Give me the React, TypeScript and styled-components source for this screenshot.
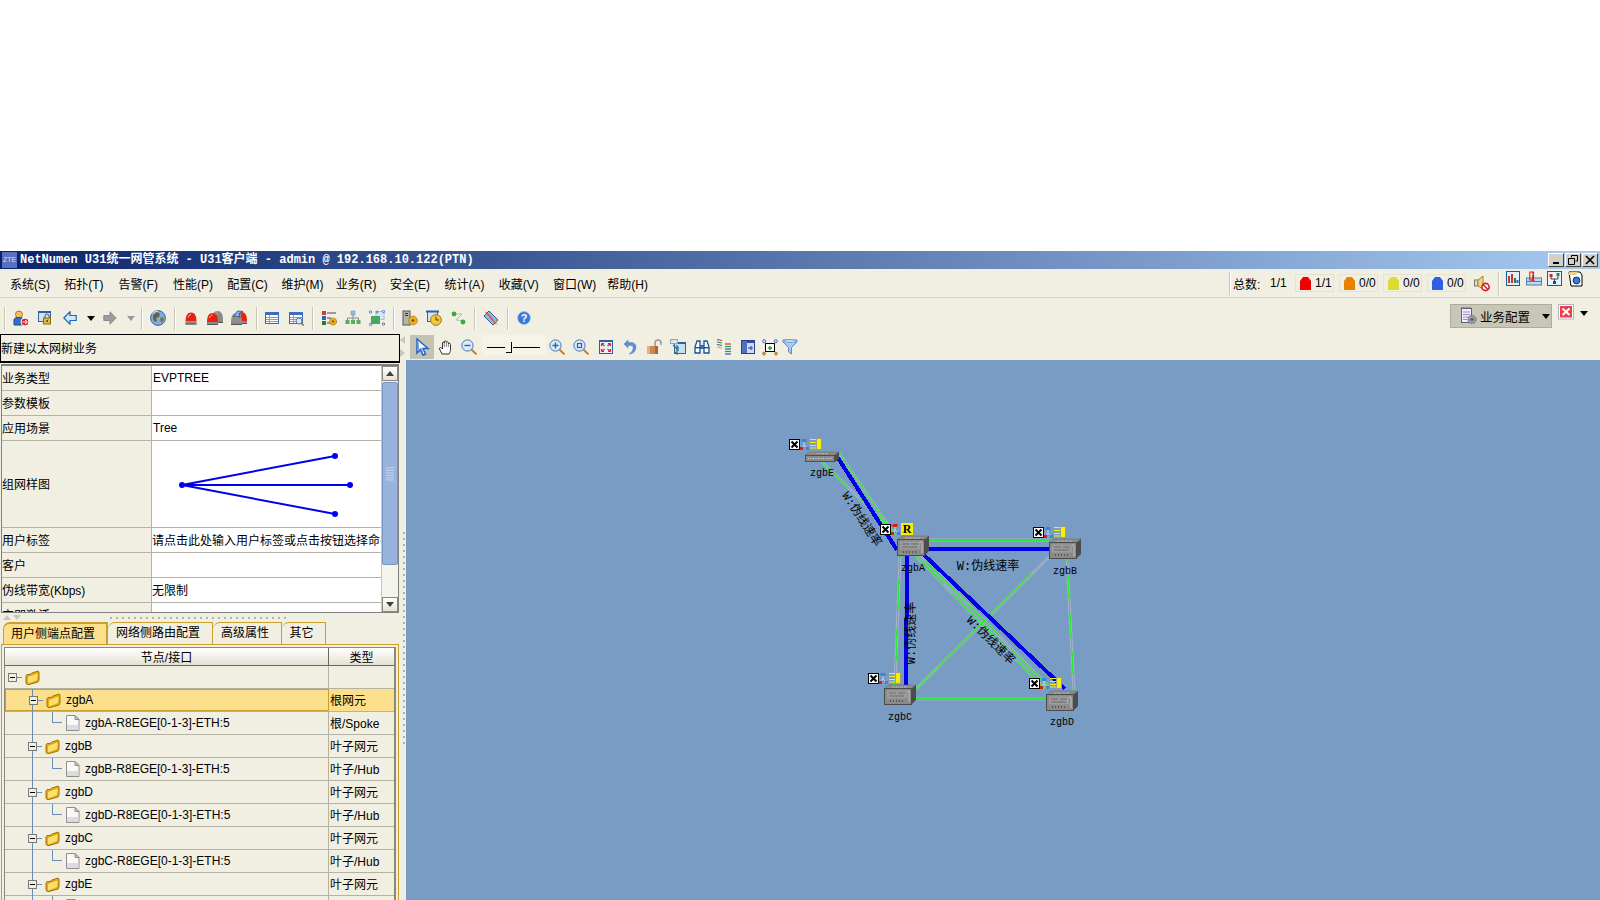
import React from 'react';
import styled, { createGlobalStyle } from 'styled-components';

const Global = createGlobalStyle`
  html, body { margin: 0; padding: 0; background: #fff; }
  body { font-family: "Liberation Sans", "Noto Sans CJK SC", sans-serif; font-size: 12px; color: #000; }
`;

const BG = '#f1efe2';

const Page = styled.div`
  width: 1600px;
  height: 900px;
  padding-top: 251px;
  box-sizing: border-box;
  overflow: hidden;
  background: #fff;
`;
const Win = styled.div`
  height: 649px;
  display: flex;
  flex-direction: column;
  background: ${BG};
`;
const TitleBar = styled.div`
  height: 18px;
  flex: none;
  display: flex;
  align-items: center;
  padding: 0 2px;
  background: linear-gradient(90deg, #0a246a, #a6caf0);
`;
const Logo = styled.div`
  width: 15px;
  height: 16px;
  margin-right: 3px;
  background: #5a6fc0;
  color: #dde;
  font: 7px/16px "Liberation Sans", sans-serif;
  text-align: center;
`;
const TitleText = styled.div`
  flex: 1;
  color: #fff;
  font: bold 12px/20px "Liberation Mono", "Noto Sans CJK SC", monospace;
  white-space: pre;
`;
const WinBtn = styled.div`
  width: 16px;
  height: 14px;
  margin-left: 1px;
  background: #d4d0c8;
  border: 1px solid;
  border-color: #fff #404040 #404040 #fff;
  box-sizing: border-box;
  display: flex;
  align-items: center;
  justify-content: center;
`;
const MenuBar = styled.div`
  height: 29px;
  flex: none;
  box-sizing: border-box;
  display: flex;
  align-items: center;
  padding-left: 10px;
  border-bottom: 1px solid #d6d3c4;
  gap: 14.3px;
`;
const MenuItem = styled.div`
  width: 40px;
  white-space: nowrap;
  font-size: 12px;
`;
const Status = styled.div`
  margin-left: auto;
  height: 28px;
  display: flex;
  align-items: center;
  padding-right: 16px;
`;
const VSep = styled.div<{ $ml?: number; $h?: number }>`
  width: 2px;
  flex: none;
  height: ${p => p.$h ?? 23}px;
  margin-left: ${p => p.$ml ?? 0}px;
  background: #fff;
  border-left: 1px solid #c9c6b6;
  box-sizing: border-box;
`;
const StatLabel = styled.div<{ $w: number; $pl?: number }>`
  width: ${p => p.$w}px;
  padding-left: ${p => p.$pl ?? 0}px;
  box-sizing: border-box;
  white-space: nowrap;
`;
const Badge = styled.div`
  width: 39px;
  height: 18px;
  margin-right: 5px;
  box-sizing: border-box;
  border: 1px solid #e6e3d5;
  display: flex;
  align-items: center;
  gap: 4px;
  padding-left: 4px;
`;
const TopIcon = styled.div<{ $w: number; $ml?: number; $center?: boolean }>`
  width: ${p => p.$w}px;
  margin-left: ${p => p.$ml ?? 0}px;
  align-self: ${p => (p.$center ? 'center' : 'flex-start')};
  margin-top: ${p => (p.$center ? 0 : 2)}px;
  display: flex;
`;
const Toolbar = styled.div`
  height: 36px;
  flex: none;
  box-sizing: border-box;
  padding: 4px 0 0 4px;
  display: flex;
  align-items: center;
`;
const Tool = styled.div<{ $w: number }>`
  width: ${p => p.$w}px;
  flex: none;
  display: flex;
  justify-content: center;
  align-items: center;
`;
const BizButton = styled.div`
  margin-left: auto;
  align-self: flex-start;
  margin-top: 2px;
  width: 102px;
  height: 24px;
  box-sizing: border-box;
  background: #c8c6b6;
  border: 1px solid #aeac9c;
  display: flex;
  align-items: center;
  padding-left: 9px;
  gap: 3px;
  font-size: 12.5px;
  white-space: nowrap;
`;
const BizCaret = styled.div`
  margin-left: 9px;
  display: flex;
`;
const RedClose = styled.div`
  align-self: flex-start;
  margin: 2px 0 0 6px;
  display: flex;
`;
const RightCaret = styled.div`
  align-self: flex-start;
  margin: 9px 12px 0 6px;
  display: flex;
`;
const Main = styled.div`
  flex: 1;
  min-height: 0;
  display: flex;
`;
const Left = styled.div`
  width: 400px;
  flex: none;
  display: flex;
  flex-direction: column;
  overflow: hidden;
`;
const Header = styled.div`
  height: 29px;
  flex: none;
  box-sizing: border-box;
  border: 1px solid #000;
  border-bottom-width: 2px;
  width: 400px;
  line-height: 29px;
  margin-bottom: 1px;
`;
const PropBox = styled.div`
  height: 249px;
  width: 398px;
  margin-left: 1px;
  flex: none;
  box-sizing: border-box;
  display: flex;
  border: 1px solid #808080;
  border-width: 2px 1px 1px 1px;
  overflow: hidden;
`;
const PropGrid = styled.div`
  flex: 1;
  overflow: hidden;
`;
const PropRow = styled.div<{ $h: number }>`
  height: ${p => p.$h}px;
  box-sizing: border-box;
  display: flex;
  border-bottom: 1px solid #b4b2a4;
`;
const PropName = styled.div`
  width: 150px;
  flex: none;
  box-sizing: border-box;
  padding: 0 0 2px 0;
  border-right: 1px solid #b4b2a4;
  display: flex;
  align-items: center;
  white-space: nowrap;
`;
const PropValue = styled.div<{ $pl?: number; $flush?: boolean }>`
  flex: 1;
  min-width: 0;
  background: #fff;
  padding-left: ${p => p.$pl ?? 1}px;
  padding-bottom: ${p => (p.$flush ? 0 : 1)}px;
  display: flex;
  align-items: center;
  white-space: nowrap;
  overflow: hidden;
`;
const CheckBox = styled.div`
  width: 11px;
  height: 11px;
  margin: 6px 0 0 6px;
  flex: none;
  box-sizing: border-box;
  border: 1px solid #6a7a9a;
`;
const Scroll = styled.div`
  width: 16px;
  flex: none;
  display: flex;
  flex-direction: column;
  background: #f5f4ea;
  border-left: 1px solid #c9c6b6;
`;
const ScrollBtn = styled.div`
  height: 15px;
  flex: none;
  box-sizing: border-box;
  background: linear-gradient(#ffffff, #e6e3d3);
  border: 1px solid #8a8878;
  display: flex;
  align-items: center;
  justify-content: center;
`;
const Thumb = styled.div`
  height: 183px;
  margin-top: 1px;
  box-sizing: border-box;
  background: #98b4dc;
  border: 1px solid #7896c4;
  border-radius: 2px;
  display: flex;
  align-items: center;
  justify-content: center;
`;
const ScrollSpace = styled.div`
  flex: 1;
`;
const HSplit = styled.div`
  height: 9px;
  flex: none;
  display: flex;
  align-items: center;
  padding-left: 3px;
`;
const HDots = styled.div`
  width: 178px;
  height: 2px;
  margin-left: 89px;
  background: repeating-linear-gradient(90deg, #b4b2a4 0 2px, transparent 2px 6px);
`;
const Tabs = styled.div`
  height: 22px;
  flex: none;
  display: flex;
  padding-left: 3px;
`;
const Tab = styled.div<{ $w: number; $on?: boolean }>`
  width: ${p => p.$w}px;
  box-sizing: border-box;
  padding-right: 4px;
  background: ${p => (p.$on ? '#fbdf8a' : BG)};
  border: 1px solid #c8a030;
  border-width: ${p => (p.$on ? '2px 2px 0 1px' : '1px 1px 0 0')};
  border-top-left-radius: 7px;
  text-align: center;
  line-height: 20px;
  font-size: 12px;
  white-space: nowrap;
`;
const TabPanel = styled.div`
  flex: 1;
  width: 398px;
  margin-left: 1px;
  box-sizing: border-box;
  border: 1px solid #c8a030;
  border-bottom: none;
  padding: 2px 0 0 2px;
  overflow: hidden;
`;
const TreeTable = styled.div`
  width: 392px;
  box-sizing: border-box;
  border-left: 1px solid #8a8878;
  border-right: 2px solid #8a8878;
`;
const HeadRow = styled.div`
  height: 19px;
  display: flex;
  box-sizing: border-box;
  border-top: 1px solid #8a8878;
  border-bottom: 1px solid #6a6858;
  background: linear-gradient(#ffffff, #e4e2d2);
  line-height: 20px;
  text-align: center;
`;
const HeadA = styled.div`
  width: 324px;
  border-right: 1px solid #6a6858;
  box-sizing: border-box;
`;
const HeadB = styled.div`
  flex: 1;
`;
const Row = styled.div<{ $h?: number; $sel?: boolean }>`
  height: ${p => p.$h ?? 23}px;
  box-sizing: border-box;
  display: flex;
  border-bottom: 1px solid #b4b2a4;
  background: ${p => (p.$sel ? '#fbdf8a' : 'transparent')};
`;
const NodeCell = styled.div<{ $kind: string; $sel?: boolean }>`
  width: 324px;
  box-sizing: border-box;
  position: relative;
  display: flex;
  align-items: center;
  padding-left: ${p => (p.$kind === 'root' ? 3 : p.$kind === 'node' ? (p.$sel ? 24 : 23) : 61)}px;
  border-right: 1px solid #b4b2a4;
  outline: ${p => (p.$sel ? '1px solid #c8a030' : 'none')};
  outline-offset: -1px;
  &::before {
    content: '';
    display: ${p => (p.$kind === 'root' ? 'none' : 'block')};
    position: absolute;
    left: 27px;
    top: 0;
    bottom: -1px;
    width: 1px;
    background: #6c8cb8;
  }
  &::after {
    content: '';
    display: ${p => (p.$kind === 'child' ? 'block' : 'none')};
    position: absolute;
    left: 47px;
    top: 0;
    width: 10px;
    height: 11px;
    box-sizing: border-box;
    border-left: 1px solid #6c8cb8;
    border-bottom: 1px solid #6c8cb8;
  }
`;
const Handle = styled.div`
  width: 9px;
  height: 9px;
  box-sizing: border-box;
  border: 1px solid #7a7a7a;
  background: ${BG};
  position: relative;
  z-index: 1;
  flex: none;
  margin-right: 8px;
  &::before {
    content: '';
    position: absolute;
    left: 1px;
    right: 1px;
    top: 3px;
    height: 1px;
    background: #000;
  }
  &::after {
    content: '';
    position: absolute;
    left: 8px;
    top: 3px;
    width: 5px;
    height: 1px;
    background: #6c8cb8;
  }
`;
const NodeText = styled.span`
  margin-left: 5px;
  white-space: nowrap;
`;
const TypeCell = styled.div`
  flex: 1;
  padding-left: 1px;
  padding-bottom: 2px;
  display: flex;
  align-items: center;
  white-space: nowrap;
`;
const VSplit = styled.div`
  width: 6px;
  flex: none;
  display: flex;
  flex-direction: column;
  align-items: flex-start;
`;
const SplitArrows = styled.div`
  height: 26px;
  flex: none;
  display: flex;
`;
const VDots = styled.div`
  width: 2px;
  height: 213px;
  margin: 172px 0 0 3px;
  background: repeating-linear-gradient(180deg, #b4b2a4 0 2px, transparent 2px 6px);
`;
const Right = styled.div`
  flex: 1;
  min-width: 0;
  display: flex;
  flex-direction: column;
`;
const CanvasBar = styled.div`
  height: 26px;
  flex: none;
  padding-left: 4px;
  display: flex;
  align-items: center;
`;
const ArrowTool = styled.div`
  width: 24px;
  height: 24px;
  background: #c4c2b2;
  display: flex;
  align-items: center;
  justify-content: center;
`;
const SliderBox = styled.div`
  width: 64px;
  height: 20px;
  margin: 0 0 4px 2px;
  background: #f6f4ea;
  flex: none;
  display: flex;
`;
const Canvas = styled.div`
  flex: 1;
  background: #789cc4;
  position: relative;
  overflow: hidden;
`;
const Topo = styled.svg`
  position: absolute;
  left: 0;
  top: 0;
  width: 1194px;
  height: 540px;
  text { font-family: "Liberation Mono", "Noto Sans CJK SC", monospace; fill: #000; }
`;

/* ------- small drawings ------- */
const S = ({ w = 16, h = 16, vb, children }: { w?: number; h?: number; vb?: string; children: React.ReactNode }) => (
  <svg width={w} height={h} viewBox={vb ?? `0 0 ${w} ${h}`} style={{ display: 'block', flex: 'none' }}>{children}</svg>
);
const Caret = ({ c = '#000' }: { c?: string }) => <S w={8} h={5}><path d="M0 0H8L4 5Z" fill={c} /></S>;
const Mag = ({ x = 0, y = 0, r = 3 }: { x?: number; y?: number; r?: number }) => (
  <g transform={`translate(${x} ${y})`}>
    <path d={`M${r * .7} ${r * .7}L${r * 1.6} ${r * 1.6}`} stroke="#d08020" strokeWidth="2" />
    <circle r={r} fill="#d8ecfa" stroke="#4a70b0" />
  </g>
);
const Gear = ({ x, y, r = 3.4, c = '#e8b020' }: { x: number; y: number; r?: number; c?: string }) => (
  <g transform={`translate(${x} ${y})`}>
    <circle r={r} fill={c} stroke="#8a6010" strokeWidth=".8" strokeDasharray="1.3 .8" />
    <circle r={r * .7} fill={c} />
    <circle r={r * .3} fill="#6a4a10" />
  </g>
);
const Dome = ({ x, y, c = '#e82010', w = 11 }: { x: number; y: number; c?: string; w?: number }) => (
  <g transform={`translate(${x} ${y})`}>
    <path d={`M0 9C0 3 2 0 ${w / 2} 0S${w} 3 ${w} 9Z`} fill={c} />
    <path d="M2.5 5C3 3 4 2 5.5 2" stroke="#ffb0a0" fill="none" strokeWidth="1" />
    <rect y="9" width={w} height="3" fill="#8a8a8a" />
    <rect y="11" width={w} height="1" fill="#555" />
  </g>
);
const TableLines = () => (
  <>
    <rect x="1" y="2" width="14" height="3" fill="#3d6cc0" />
    <rect x="1.5" y="4.5" width="13" height="9" fill="#fff" stroke="#3d6cb0" />
    <path d="M2 7.5H14M2 9.5H14M2 11.5H14" stroke="#7aa0d8" />
    <path d="M5.5 5V13" stroke="#7aa0d8" />
  </>
);

const I: Record<string, React.ReactNode> = {
  user: <S><circle cx="6" cy="4.5" r="3.5" fill="#f2c060" stroke="#b07820" /><path d="M1 15V10C1 8 3 7.5 6 7.5S10 8 10 10V15Z" fill="#2f70c8" stroke="#1d4c90" /><circle cx="12" cy="12" r="4" fill="#d82020" stroke="#fff" /><path d="M9.5 12H14M12 10L14.5 12L12 14" stroke="#fff" fill="none" /></S>,
  lockscr: <S><rect x="1.5" y="1.5" width="12" height="10" fill="#cfe2f6" stroke="#3462a8" /><rect x="1" y="1" width="13" height="2" fill="#2f5da8" /><path d="M8 8V6A2 2 0 0 1 12 6V8" stroke="#555" fill="none" /><rect x="6.5" y="8" width="7" height="6" fill="#e8b840" stroke="#8a6a10" /><rect x="9.5" y="10" width="1.5" height="2" fill="#604000" /></S>,
  back: <S w={14} h={14}><path d="M.8 7L7 .8V4.5H13.2V9.5H7V13.2Z" fill="#d4e8f8" stroke="#1a68b8" strokeWidth="1.2" /></S>,
  fwd: <S w={14} h={14}><path d="M13.2 7L7 .8V4.5H.8V9.5H7V13.2Z" fill="#9c9c9c" stroke="#8a8a8a" /></S>,
  globe: <S><circle cx="8" cy="8" r="7.4" fill="#7eaee0" stroke="#37628f" /><path d="M3 5L7 2L10 4L9 7L6 8L7 11L5 12L3 9Z" fill="#6a6038" /><path d="M10 8L13 7L14 10L11 13Z" fill="#7a7040" /><path d="M2.5 4A7 7 0 0 1 8 1" stroke="#e4f0ff" fill="none" /></S>,
  alarm1: <S w={12} h={13}><Dome x={0.5} y={0.5} /></S>,
  alarm2: <S h={14}><Dome x={5} y={0} c="#8a8a8a" /><Dome x={0} y={2} /></S>,
  alarm3: <S h={16}><Dome x={5} y={2} /><Dome x={0} y={3} c="#909090" /><path d="M2 7L6.5 1L12 1.5L8 3.5L9 7.5L5.5 6Z" fill="#8ab8ec" stroke="#2a5898" strokeWidth=".9" /></S>,
  table: <S><TableLines /></S>,
  tfind: <S><TableLines /><Mag x={11} y={11} r={3} /></S>,
  cfg: <S><rect x="1" y="1" width="4" height="4" fill="#c84030" /><rect x="1" y="6" width="4" height="4" fill="#3060c0" /><rect x="1" y="11" width="4" height="4" fill="#208030" /><path d="M6 3H15M6 8H10M6 13H9" stroke="#444" /><Gear x={12} y={11.5} r={3.6} /></S>,
  org: <S><rect x="6" y="1" width="4" height="4" fill="#90b8e8" stroke="#6a90c8" strokeWidth=".5" /><path d="M8 5V8M2.5 10V8H13.5V10M8 8V10" stroke="#888" fill="none" /><rect x="0.5" y="10" width="4" height="4" fill="#60a860" /><rect x="6" y="10" width="4" height="4" fill="#60a860" /><rect x="11.5" y="10" width="4" height="4" fill="#60a860" /></S>,
  sel: <S><rect x="7" y="1.5" width="8" height="8" fill="#d8e6f6" stroke="#a8c0e0" /><rect x="2" y="6" width="9" height="8" fill="#48a860" /><g fill="#e8f0ff" stroke="#3060c0" strokeWidth=".8"><circle cx="1.5" cy="2" r="1.2" /><circle cx="8" cy="2" r="1" /><circle cx="14.5" cy="14" r="1.2" /><circle cx="1.5" cy="14.5" r="1.2" /><circle cx="14.5" cy="1.5" r="1.2" /></g></S>,
  srv: <S><rect x="1" y="1" width="7" height="14" fill="#b4b4ac" stroke="#555" /><rect x="3" y="3" width="3" height="1" fill="#333" /><rect x="3" y="5" width="3" height="1" fill="#333" /><Gear x={11} y={10.5} r={4.4} /></S>,
  clock: <S><rect x="1.5" y="1.5" width="10" height="10" fill="#cfe2f6" stroke="#3462a8" /><rect x="0" y="0.5" width="13" height="2" fill="#2f5da8" /><circle cx="10" cy="10" r="5.4" fill="#f2c840" stroke="#a87810" /><path d="M10 6.5V10H13" stroke="#604000" fill="none" /></S>,
  nodes: <S w={15} h={14}><path d="M3 3L11 3L5 9L13 10" stroke="#bbb" fill="none" /><circle cx="3" cy="3" r="2.4" fill="#30b040" /><circle cx="12" cy="11" r="2.4" fill="#30b040" /></S>,
  tools: <S><path d="M1 6L6 1L15 10L10 15Z" fill="#8abcec" stroke="#2c5c98" /><path d="M3 2L13 14" stroke="#e05828" strokeWidth="1.6" /><path d="M12 13L15 15.5L14 12Z" fill="#e8c860" /></S>,
  help: <S w={14} h={14} vb="0 0 14 14"><circle cx="7" cy="7" r="6.5" fill="#3878d8" stroke="#a8c8f0" /><text x="7" y="11" textAnchor="middle" fontFamily="Liberation Sans" fontWeight="bold" fontSize="11" fill="#fff">?</text></S>,
  cursor: <S h={18}><path d="M3 1V15L6.5 11.5L9 17L11.5 16L9 10.5H14Z" fill="#fff" stroke="#1a60c0" strokeWidth="1.4" /><path d="M4.5 4V12L7 10L9 14" fill="none" stroke="#7aa8e8" /></S>,
  hand: <S><path d="M4 15L1.5 10C1 8.5 2.5 8 3.5 9L4.5 10V4C4.5 2.8 6 2.8 6.3 4V3C6.3 1.5 8 1.5 8.4 3V3.5C8.6 2.2 10.3 2.3 10.4 4V5C10.8 4 12.5 4 12.5 5.5V10C12.5 12 12 13.5 11 15Z" fill="#fff" stroke="#333" /><path d="M6.3 4V8M8.4 3.5V8M10.4 5V8" stroke="#888" /></S>,
  zout: <S><Mag x={6.5} y={6.5} r={5.6} /><path d="M3.5 6.5H9.5" stroke="#3460a8" strokeWidth="1.4" /></S>,
  zin: <S><Mag x={6.5} y={6.5} r={5.6} /><path d="M3.5 6.5H9.5M6.5 3.5V9.5" stroke="#3460a8" strokeWidth="1.4" /></S>,
  zfit: <S><Mag x={6.5} y={6.5} r={5.6} /><rect x="4.5" y="4.5" width="4" height="4" fill="none" stroke="#3460a8" strokeWidth="1.2" /></S>,
  fit: <S><rect x="1.5" y="2" width="13" height="12.5" fill="#e8f0fa" stroke="#2f5da8" /><rect x="1" y="1" width="14" height="2" fill="#2f5da8" /><path d="M4 5L6.5 7M12 5L9.5 7M4 12L6.5 10M12 12L9.5 10M3.5 4.5H6M3.5 4.5V7M12.5 4.5H10M12.5 4.5V7M3.5 12.5H6M3.5 12.5V10M12.5 12.5H10M12.5 12.5V10" stroke="#e02020" strokeWidth="1.2" fill="none" /></S>,
  undo: <S w={14} h={16}><path d="M5 1L1 5L5 9V6.5H8C10 6.5 10.5 8 10 10C9.6 12 8 14 6 15C10 15 13 12 13 8C13 5 11 3.5 8 3.5H5Z" fill="#5a90d8" stroke="#4a80c8" strokeWidth=".5" /></S>,
  unlock: <S><path d="M9 7V4A3 3 0 0 1 15 4V6" stroke="#999" strokeWidth="1.5" fill="none" /><rect x="1" y="7" width="11" height="8" fill="#cc8a50" /><rect x="1" y="7" width="3" height="8" fill="#e8b080" /><rect x="9" y="7" width="3" height="8" fill="#a86830" /></S>,
  wincur: <S><rect x="4.5" y="4.5" width="11" height="10" fill="#c8e0f4" stroke="#2f6098" /><rect x="4" y="3" width="12" height="2" fill="#2f6098" /><rect x="0.5" y="0.5" width="7" height="4" fill="#d8e8f0" stroke="#8ab" /><path d="M3 6L8 11V8L7 7V15L5 13" stroke="#2a7a8a" strokeWidth="1.3" fill="none" /></S>,
  bino: <S><path d="M1 14V8L3 2H6V14Z M10 14V2H13L15 8V14Z" fill="#fff" stroke="#1a5090" strokeWidth="1.3" /><rect x="6" y="6" width="4" height="4" fill="#2a68b0" /><rect x="1" y="8" width="5" height="1.4" fill="#1a5090" /><rect x="10" y="8" width="5" height="1.4" fill="#1a5090" /></S>,
  lines: <S h={18}><g strokeWidth="1.2"><path d="M1 1.5L6 2.5" stroke="#d03030" /><path d="M1 4L6 5" stroke="#20a040" /><path d="M1 6.5L6 7.5" stroke="#3050c8" /><path d="M1 9L6 10" stroke="#e8a020" /><path d="M9 6H15" stroke="#d03030" /><path d="M9 8.5H15" stroke="#20a040" /><path d="M9 11H15" stroke="#3050c8" /><path d="M9 13.5H15" stroke="#20a040" /><path d="M9 16H15" stroke="#3050c8" /></g></S>,
  winplus: <S w={14} h={14}><rect x=".5" y=".5" width="13" height="13" fill="#d0dcf0" stroke="#283f90" strokeWidth="1" /><rect x="1" y="1" width="12" height="2" fill="#3050a8" /><rect x="1" y="1" width="5" height="12" fill="#5070c0" /><path d="M7 8H12M10 6V10" stroke="#283f90" /></S>,
  nodesel: <S h={17} vb="0 0 16 17"><rect x="3.5" y="4.5" width="9" height="8" fill="#fff" stroke="#000" /><path d="M6 9H10M8 7V11" stroke="#20a040" strokeWidth="1.4" /><path d="M3.5 4.5L2 2.5M12.5 4.5L14 2.5" stroke="#555" /><g fill="#c8e0f8" stroke="#3060a8" strokeWidth=".8"><circle cx="2.2" cy="2.2" r="1.6" /><circle cx="13.8" cy="2.2" r="1.6" /></g><g fill="#e8b040" stroke="#906010" strokeWidth=".8"><circle cx="2" cy="14.6" r="1.4" /><circle cx="14" cy="14.6" r="1.4" /></g></S>,
  funnel: <S><path d="M1 1H15V3L9.5 8.5V15L6.5 13V8.5L1 3Z" fill="#a8ccf0" stroke="#5a8ac8" /><ellipse cx="8" cy="2" rx="7" ry="1.3" fill="#d8ecff" stroke="#6a98d0" /></S>,
  speaker: <S h={17} vb="0 0 16 17"><rect x="0.5" y="5" width="3.5" height="6" fill="#ddd" stroke="#777" /><path d="M4 5L9 1V14L4 11Z" fill="#f0d878" stroke="#a08838" /><circle cx="11.5" cy="12" r="3.6" fill="#fff" stroke="#d02020" strokeWidth="1.6" /><path d="M9 9.5L14 14.5" stroke="#d02020" strokeWidth="1.5" /></S>,
  chart: <S w={14} h={15}><rect x=".5" y=".5" width="13" height="14" fill="#dff0fa" stroke="#1a5a98" /><path d="M3 12V5" stroke="#d03030" strokeWidth="2" /><path d="M6 12V3" stroke="#d03030" strokeWidth="2" /><path d="M9 12V7" stroke="#208040" strokeWidth="2" /><path d="M11.5 12V9" stroke="#3060c0" strokeWidth="2" /></S>,
  info: <S h={15}><rect x="0.5" y="7" width="15" height="7" fill="#bcd8f0" stroke="#4a80b0" /><path d="M0 10.5H16" stroke="#4a80b0" /><text x="5.5" y="10" fontFamily="Liberation Serif" fontWeight="bold" fontSize="12" fill="#e01818">i</text><rect x="3.8" y="1" width="3.5" height="8" fill="none" stroke="#e01818" /></S>,
  tree: <S w={15} h={15}><rect x=".5" y=".5" width="14" height="14" fill="#e8f4fc" stroke="#1a5a98" /><rect x="2.5" y="3" width="3" height="3" fill="#e02020" /><rect x="9.5" y="2" width="3" height="3" fill="#209040" /><rect x="6" y="10" width="3" height="3" fill="#2040c0" /><path d="M4 6V8H11V5M7.5 8V10" stroke="#444" fill="none" /></S>,
  note: <S h={16}><path d="M1 1H12L14 4V15H3Z" fill="#fff" stroke="#000" /><path d="M1 1H10L8 4H1Z" fill="#f0d090" /><circle cx="8.5" cy="9.5" r="3.4" fill="#3080d0" stroke="#103860" /></S>,
  biz: <S h={18} w={17}><rect x="1.5" y="1.5" width="10" height="14" fill="#f4f0fa" stroke="#606078" /><path d="M1.5 1H11.5" stroke="#706090" strokeWidth="2" strokeDasharray="1 1" /><path d="M3 5H10M3 7.5H10M3 10H8M3 12.5H7" stroke="#9a88c8" /><Gear x={12} y={12.5} r={4.2} c="#8a9cb4" /></S>,
  red: <S><rect x=".5" y=".5" width="15" height="14.5" fill="#fff" stroke="#b8b4c4" /><rect x="2" y="2" width="12" height="11.5" fill="#ec4048" /><path d="M4.5 4.5L11.5 11M11.5 4.5L4.5 11" stroke="#fff" strokeWidth="2" /></S>,
  folder: <S w={15} h={15}><path d="M1 6L2 4.5H5L7 3L13 1L14 2V10L13 12L4 14.5H2L1 13Z" fill="#e8a810" stroke="#a07408" /><path d="M3 7L12.5 3.5Q13 6 12 10L3 13.5Z" fill="#fbe070" /></S>,
  page: <S w={14} h={16}><path d="M.5 .5H9L13 4.5V15.5H.5Z" fill="#f8f8f8" stroke="#909090" /><path d="M9 .5V4.5H13Z" fill="#c8c8c8" stroke="#909090" /><rect x="1" y="10" width="11.5" height="5" fill="#dcdce0" /></S>,
  up: <S w={8} h={5}><path d="M0 5H8L4 0Z" fill="#404040" /></S>,
  down: <S w={8} h={5}><path d="M0 0H8L4 5Z" fill="#404040" /></S>,
  grip: <S w={10} h={14}><path d="M1 1H9M1 3.5H9M1 6H9M1 8.5H9M1 11H9M1 13H9" stroke="#c4d4ee" /></S>,
};

const XBox = ({ x, y }: { x: number; y: number }) => (
  <g transform={`translate(${x} ${y})`}>
    <rect x=".5" y=".5" width="10" height="10" fill="#fff" stroke="#000" />
    <path d="M2.5 2.5L8.5 8.5M8.5 2.5L2.5 8.5" stroke="#000" strokeWidth="2" />
  </g>
);
const NetIcon = ({ x, y, top = '#3a88d0' }: { x: number; y: number; top?: string }) => (
  <g transform={`translate(${x} ${y})`}>
    <path d="M4 3V6L1.5 9M4 6L7 9" stroke="#c0d8ec" fill="none" />
    <rect x="1.5" y="0" width="5" height="3" fill={top} />
    <rect x="0" y="8" width="3" height="3" fill="#e01818" />
    <rect x="6" y="8" width="3" height="3" fill="#3a88d0" />
  </g>
);
const YellowCard = ({ x, y }: { x: number; y: number }) => (
  <g transform={`translate(${x} ${y})`}>
    <path d="M0 1.5H6M0 4.5H6M0 7.5H6M0 10H6" stroke="#f8f000" strokeWidth="1.2" />
    <rect x="6.5" y=".5" width="5" height="11" fill="#f8f000" stroke="#9aa080" />
  </g>
);
const Device = ({ x, y, small }: { x: number; y: number; small?: boolean }) =>
  small ? (
    <g transform={`translate(${x} ${y})`}>
      <path d="M0 3L4 0H34L30 3Z" fill="#8c8c8c" stroke="#6a6a6a" strokeWidth=".5" />
      <path d="M30 3L34 0V7L30 10Z" fill="#4c4c4c" />
      <rect x=".5" y="3.5" width="29" height="6" fill="#8a8a8a" stroke="#505050" />
      <path d="M3 6.5H27" stroke="#e0e0e0" strokeDasharray="1 1.5" />
      <path d="M12 1.5H24" stroke="#b0b0b0" strokeDasharray="3 1" />
    </g>
  ) : (
    <g transform={`translate(${x} ${y})`}>
      <path d="M0 4L5 0H32L27 4Z" fill="#8c8c8c" stroke="#6a6a6a" strokeWidth=".5" />
      <path d="M27 4L32 0V15L27 20Z" fill="#4c4c4c" />
      <rect x=".5" y="3.5" width="27" height="16" fill="#8a8a8a" stroke="#4c4c4c" />
      <rect x="3" y="5.5" width="20" height="8" fill="#9c9c9c" />
      <path d="M5 8H12M5 11H20M14 8H21" stroke="#6a6a6a" />
      <path d="M6 16H21" stroke="#222" strokeDasharray="1 2" />
      <path d="M23 6H25V17" stroke="#c0c0c0" fill="none" />
      <path d="M8 2H24" stroke="#b0b0b0" strokeDasharray="3 1" />
    </g>
  );

const greens: number[][] = [
  [839, 453, 895, 535],
  [822, 462, 885, 523],
  [929, 540, 1049, 540],
  [900, 556, 895, 685],
  [916, 556, 1045, 689],
  [920, 555, 1048, 686],
  [1049, 557, 916, 689],
  [1067, 559, 1074, 691],
  [916, 699, 1046, 699],
];
const blues: number[][] = [
  [838, 458, 897, 550],
  [929, 549, 1049, 549],
  [907, 556, 906, 685],
  [924, 555, 1065, 689],
];

const Topology = () => (
  <Topo viewBox="406 360 1194 540">
    {greens.map(([a, b, c, d], i) => (
      <line key={`h${i}`} x1={a} y1={b} x2={c} y2={d} stroke="#b8c0cc" strokeWidth="3" opacity=".6" />
    ))}
    {greens.map(([a, b, c, d], i) => (
      <line key={`g${i}`} x1={a} y1={b} x2={c} y2={d} stroke="#30e830" strokeWidth="1.2" shapeRendering="crispEdges" />
    ))}
    {blues.map(([a, b, c, d], i) => (
      <line key={`b${i}`} x1={a} y1={b} x2={c} y2={d} stroke="#0000e8" strokeWidth="4" shapeRendering="crispEdges" />
    ))}
    <Device x={805} y={452} small />
    <Device x={897} y={536} />
    <Device x={1049} y={539} />
    <Device x={884} y={685} />
    <Device x={1046} y={691} />

    <XBox x={789} y={439} /><NetIcon x={800} y={439} /><YellowCard x={810} y={438} />
    <XBox x={880} y={524} /><NetIcon x={891} y={524} top="#e01818" />
    <rect x="901" y="523" width="12" height="12" fill="#f8f000" />
    <text x="907" y="533" textAnchor="middle" fontSize="12" fontWeight="bold" style={{ fontFamily: '"Liberation Serif", serif' }}>R</text>
    <XBox x={1033} y={527} /><NetIcon x={1044} y={527} /><YellowCard x={1054} y={526} />
    <XBox x={868} y={673} /><NetIcon x={879} y={673} /><YellowCard x={889} y={672} />
    <XBox x={1029} y={678} /><NetIcon x={1040} y={678} /><YellowCard x={1050} y={677} />

    <text x="822" y="476" fontSize="10" textAnchor="middle">zgbE</text>
    <text x="913" y="571" fontSize="10" textAnchor="middle">zgbA</text>
    <text x="1065" y="574" fontSize="10" textAnchor="middle">zgbB</text>
    <text x="900" y="720" fontSize="10" textAnchor="middle">zgbC</text>
    <text x="1062" y="725" fontSize="10" textAnchor="middle">zgbD</text>

    <text x="988" y="570" fontSize="12" textAnchor="middle">W:伪线速率</text>
    <text transform="translate(862 519) rotate(57)" y="4" fontSize="12" textAnchor="middle">W:伪线速率</text>
    <text transform="translate(911 633) rotate(-90)" y="4" fontSize="12" textAnchor="middle">W:伪线速率</text>
    <text transform="translate(991 640) rotate(45)" y="4" fontSize="12" textAnchor="middle">W:伪线速率</text>
  </Topo>
);

const menus = ['系统(S)', '拓扑(T)', '告警(F)', '性能(P)', '配置(C)', '维护(M)', '业务(R)', '安全(E)', '统计(A)', '收藏(V)', '窗口(W)', '帮助(H)'];
const alarms = [
  { c: '#f00000', t: '1/1' },
  { c: '#e88000', t: '0/0' },
  { c: '#dcdc30', t: '0/0' },
  { c: '#2e5fe0', t: '0/0' },
];
const Lamp = ({ c }: { c: string }) => <S w={11} h={13}><path d="M0 13V4L3 0H8L11 4V13Z" fill={c} /></S>;

const rows = [
  { k: 'node', t: 'zgbA', y: '根网元', sel: true },
  { k: 'child', t: 'zgbA-R8EGE[0-1-3]-ETH:5', y: '根/Spoke' },
  { k: 'node', t: 'zgbB', y: '叶子网元' },
  { k: 'child', t: 'zgbB-R8EGE[0-1-3]-ETH:5', y: '叶子/Hub' },
  { k: 'node', t: 'zgbD', y: '叶子网元' },
  { k: 'child', t: 'zgbD-R8EGE[0-1-3]-ETH:5', y: '叶子/Hub' },
  { k: 'node', t: 'zgbC', y: '叶子网元' },
  { k: 'child', t: 'zgbC-R8EGE[0-1-3]-ETH:5', y: '叶子/Hub' },
  { k: 'node', t: 'zgbE', y: '叶子网元' },
  { k: 'child', t: 'zgbE-R8EGE[0-1-3]-ETH:5', y: '叶子/Hub' },
];

export default function App() {
  return (
    <Page>
      <Global />
      <Win>
        <TitleBar>
          <Logo>ZTE</Logo>
          <TitleText>NetNumen U31统一网管系统 - U31客户端 - admin @ 192.168.10.122(PTN)</TitleText>
          <WinBtn><S w={10} h={10}><rect x="2" y="7" width="6" height="2" fill="#000" /></S></WinBtn>
          <WinBtn><S w={10} h={10}><path d="M3.5 2.5V.5H9.5V6H7.5M.5 3.5H6.5V9.5H.5Z" fill="none" stroke="#000" /></S></WinBtn>
          <WinBtn><S w={10} h={10}><path d="M1 1L9 9M9 1L1 9" stroke="#000" strokeWidth="1.6" /></S></WinBtn>
        </TitleBar>

        <MenuBar>
          {menus.map(m => <MenuItem key={m}>{m}</MenuItem>)}
          <Status>
            <VSep />
            <StatLabel $w={39} $pl={2}>总数:</StatLabel>
            <StatLabel $w={25}>1/1</StatLabel>
            {alarms.map((a, i) => (
              <Badge key={i}><Lamp c={a.c} />{a.t}</Badge>
            ))}
            <TopIcon $w={16} $ml={3} $center>{I.speaker}</TopIcon>
            <VSep $ml={8} />
            <TopIcon $w={14} $ml={6}>{I.chart}</TopIcon>
            <TopIcon $w={16} $ml={6}>{I.info}</TopIcon>
            <TopIcon $w={15} $ml={5}>{I.tree}</TopIcon>
            <TopIcon $w={16} $ml={6}>{I.note}</TopIcon>
          </Status>
        </MenuBar>

        <Toolbar>
          <VSep />
          <Tool $w={30}>{I.user}</Tool>
          <Tool $w={18}>{I.lockscr}</Tool>
          <Tool $w={32}>{I.back}</Tool>
          <Tool $w={10}><Caret /></Tool>
          <Tool $w={28}>{I.fwd}</Tool>
          <Tool $w={14}><Caret c="#999" /></Tool>
          <VSep $ml={3} />
          <Tool $w={30}>{I.globe}</Tool>
          <VSep $ml={1} />
          <Tool $w={30}>{I.alarm1}</Tool>
          <Tool $w={18}>{I.alarm2}</Tool>
          <Tool $w={30}>{I.alarm3}</Tool>
          <VSep $ml={2} />
          <Tool $w={28}>{I.table}</Tool>
          <Tool $w={19}>{I.tfind}</Tool>
          <VSep $ml={7} />
          <Tool $w={30}>{I.cfg}</Tool>
          <Tool $w={18}>{I.org}</Tool>
          <Tool $w={30}>{I.sel}</Tool>
          <VSep $ml={1} />
          <Tool $w={30}>{I.srv}</Tool>
          <Tool $w={18}>{I.clock}</Tool>
          <Tool $w={30}>{I.nodes}</Tool>
          <VSep $ml={1} />
          <Tool $w={30}>{I.tools}</Tool>
          <VSep $ml={1} />
          <Tool $w={30}>{I.help}</Tool>
          <BizButton>
            {I.biz}
            业务配置
            <BizCaret><Caret /></BizCaret>
          </BizButton>
          <RedClose>{I.red}</RedClose>
          <RightCaret><Caret /></RightCaret>
        </Toolbar>

        <Main>
          <Left>
            <Header>新建以太网树业务</Header>
            <PropBox>
              <PropGrid>
                <PropRow $h={25}><PropName>业务类型</PropName><PropValue>EVPTREE</PropValue></PropRow>
                <PropRow $h={25}><PropName>参数模板</PropName><PropValue /></PropRow>
                <PropRow $h={25}><PropName>应用场景</PropName><PropValue>Tree</PropValue></PropRow>
                <PropRow $h={87}>
                  <PropName>组网样图</PropName>
                  <PropValue $pl={0} $flush>
                    <S w={230} h={86}>
                      <g stroke="#0000f0" strokeWidth="2" transform="translate(-152 -441)">
                        <path d="M182 485L335 456M182 485H350M182 485L335 514" fill="none" />
                        <circle cx="182" cy="485" r="3" fill="#0000f0" stroke="none" />
                        <circle cx="335" cy="456" r="3" fill="#0000f0" stroke="none" />
                        <circle cx="350" cy="485" r="3" fill="#0000f0" stroke="none" />
                        <circle cx="335" cy="514" r="3" fill="#0000f0" stroke="none" />
                      </g>
                    </S>
                  </PropValue>
                </PropRow>
                <PropRow $h={25}><PropName>用户标签</PropName><PropValue $pl={0}>请点击此处输入用户标签或点击按钮选择命名规则</PropValue></PropRow>
                <PropRow $h={25}><PropName>客户</PropName><PropValue /></PropRow>
                <PropRow $h={25}><PropName>伪线带宽(Kbps)</PropName><PropValue $pl={0}>无限制</PropValue></PropRow>
                <PropRow $h={25}><PropName>立即激活</PropName><PropValue $pl={0} $flush><CheckBox /></PropValue></PropRow>
              </PropGrid>
              <Scroll>
                <ScrollBtn>{I.up}</ScrollBtn>
                <Thumb>{I.grip}</Thumb>
                <ScrollSpace />
                <ScrollBtn>{I.down}</ScrollBtn>
              </Scroll>
            </PropBox>
            <HSplit>
              <S w={18} h={5}><path d="M0 5L4 0L8 5Z" fill="#c8c6b6" /><path d="M10 0H18L14 5Z" fill="#c8c6b6" /></S>
              <HDots />
            </HSplit>
            <Tabs>
              <Tab $w={105} $on>用户侧端点配置</Tab>
              <Tab $w={105}>网络侧路由配置</Tab>
              <Tab $w={69}>高级属性</Tab>
              <Tab $w={44}>其它</Tab>
            </Tabs>
            <TabPanel>
              <TreeTable>
                <HeadRow><HeadA>节点/接口</HeadA><HeadB>类型</HeadB></HeadRow>
                <Row $h={23}>
                  <NodeCell $kind="root"><Handle />{I.folder}</NodeCell>
                  <TypeCell />
                </Row>
                {rows.map(r => (
                  <Row key={r.t} $sel={r.sel}>
                    <NodeCell $kind={r.k} $sel={r.sel}>
                      {r.k === 'node' && <Handle />}
                      {r.k === 'node' ? I.folder : I.page}
                      <NodeText>{r.t}</NodeText>
                    </NodeCell>
                    <TypeCell>{r.y}</TypeCell>
                  </Row>
                ))}
              </TreeTable>
            </TabPanel>
          </Left>

          <VSplit>
            <SplitArrows>
              <S w={6} h={26}><path d="M5 2V10L0 6Z" fill="#c8c6b6" /><path d="M0 15V23L5 19Z" fill="#c8c6b6" /></S>
            </SplitArrows>
            <VDots />
          </VSplit>

          <Right>
            <CanvasBar>
              <ArrowTool>{I.cursor}</ArrowTool>
              <Tool $w={24}>{I.hand}</Tool>
              <Tool $w={22}>{I.zout}</Tool>
              <SliderBox>
                <S w={64} h={20}>
                  <path d="M5 12.5H23M31 12.5H58" stroke="#000" shapeRendering="crispEdges" />
                  <path d="M24 17.5H29.5V7" stroke="#000" fill="none" shapeRendering="crispEdges" />
                </S>
              </SliderBox>
              <Tool $w={22}>{I.zin}</Tool>
              <Tool $w={26}>{I.zfit}</Tool>
              <Tool $w={24}>{I.fit}</Tool>
              <Tool $w={24}>{I.undo}</Tool>
              <Tool $w={24}>{I.unlock}</Tool>
              <Tool $w={24}>{I.wincur}</Tool>
              <Tool $w={24}>{I.bino}</Tool>
              <Tool $w={20}>{I.lines}</Tool>
              <Tool $w={28}>{I.winplus}</Tool>
              <Tool $w={16}>{I.nodesel}</Tool>
              <Tool $w={24}>{I.funnel}</Tool>
            </CanvasBar>
            <Canvas><Topology /></Canvas>
          </Right>
        </Main>
      </Win>
    </Page>
  );
}
